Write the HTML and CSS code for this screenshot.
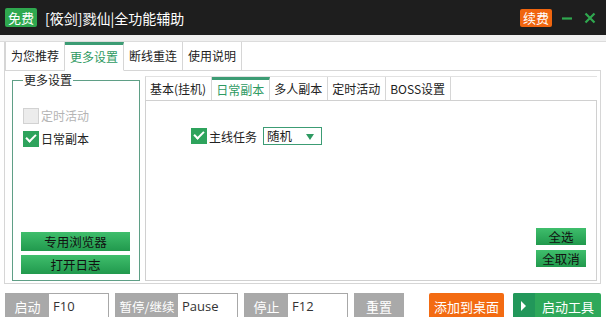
FILE: index.html
```html
<!DOCTYPE html>
<html lang="zh-CN">
<head>
    <meta charset="UTF-8">
    <title>[筱剑]戮仙|全功能辅助</title>
    <link rel="stylesheet" href="styles.css">
</head>
<body>
    <header class="titlebar">
        <span class="badge free">免费</span>
        <span class="title">[筱剑]戮仙|全功能辅助</span>
        <span class="spacer"></span>
        <span class="badge renew">续费</span>
        <svg class="win-btn" width="12" height="12" viewBox="0 0 12 12"><path d="M1 6.5h10" stroke="#2fa84f" stroke-width="2.2"/></svg>
        <svg class="win-btn" width="12" height="12" viewBox="0 0 12 12"><path d="M1.5 1.5l9 9M10.5 1.5l-9 9" stroke="#2fa84f" stroke-width="2.2"/></svg>
    </header>
    <div class="strip"></div>
    <nav class="tabs main-tabs">
        <span class="tab">为您推荐</span>
        <span class="tab active">更多设置</span>
        <span class="tab">断线重连</span>
        <span class="tab">使用说明</span>
    </nav>
    <section class="panel">
        <fieldset class="group">
            <legend>更多设置</legend>
            <label class="check disabled"><span class="box"></span>定时活动</label>
            <label class="check"><span class="box on"></span>日常副本</label>
            <div class="group-buttons">
                <button class="green-btn">专用浏览器</button>
                <button class="green-btn">打开日志</button>
            </div>
        </fieldset>
        <div class="sub">
            <nav class="tabs sub-tabs">
                <span class="tab">基本(挂机)</span>
                <span class="tab active">日常副本</span>
                <span class="tab">多人副本</span>
                <span class="tab">定时活动</span>
                <span class="tab">BOSS设置</span>
            </nav>
            <div class="sub-body">
                <div class="task-row">
                    <label class="check"><span class="box on"></span>主线任务</label>
                    <div class="select">随机<span class="arrow"></span></div>
                </div>
                <div class="side-buttons">
                    <button class="green-btn small">全选</button>
                    <button class="green-btn small">全取消</button>
                </div>
            </div>
        </div>
    </section>
    <footer class="bottombar">
        <div class="hotkey"><span class="hk-label">启动</span><span class="hk-input">F10</span></div>
        <div class="hotkey"><span class="hk-label wide">暂停/继续</span><span class="hk-input">Pause</span></div>
        <div class="hotkey"><span class="hk-label">停止</span><span class="hk-input">F12</span></div>
        <button class="gray-btn">重置</button>
        <button class="orange-btn">添加到桌面</button>
        <button class="start-btn"><span class="play"></span><span class="start-text">启动工具</span></button>
    </footer>
</body>
</html>
```

FILE: styles.css
```css
* {
    margin: 0;
    padding: 0;
    box-sizing: border-box;
}
body {
    width: 606px;
    height: 317px;
    overflow: hidden;
    background-color: #fff;
    color: #222;
    font-family: "Noto Sans CJK SC", "Liberation Sans", sans-serif;
    font-size: 12px;
}
.titlebar {
    height: 35px;
    background-color: #1e1e1e;
    display: flex;
    align-items: center;
    padding: 0 10px 0 5px;
}
.badge {
    height: 19px;
    line-height: 19px;
    padding: 0 3px;
    border-radius: 2px;
    color: #fff;
    font-size: 13px;
}
.free {
    background-color: #2fa84f;
}
.renew {
    background-color: #f0650f;
    height: 18px;
    line-height: 18px;
}
.title {
    color: #fff;
    font-size: 14px;
    margin-left: 8px;
}
.spacer {
    flex: 1;
}
.win-btn {
    margin-left: 9px;
}
.win-btn:last-child {
    margin-left: 11px;
}
.strip {
    height: 7px;
    background-color: #f0f0f0;
    border-bottom: 1px solid #dcdcdc;
}
.tabs {
    display: flex;
}
.tab {
    display: block;
    padding: 0 5px;
    border-right: 1px solid #d6d6d6;
    color: #222;
    white-space: nowrap;
}
.tab.active {
    color: #2e9a62;
    border-top: 3px solid #3c9c74;
}
.main-tabs {
    height: 28px;
    padding-left: 4px;
    border-left: 1px solid #d6d6d6;
    margin-left: 4px;
}
.main-tabs .tab {
    line-height: 27px;
}
.main-tabs .tab:first-child {
    border-left: 1px solid #d6d6d6;
    margin-left: -4px;
}
.main-tabs .tab.active {
    line-height: 23px;
    background-color: #fff;
    border-bottom: 1px solid #fff;
    height: 29px;
}
.panel {
    height: 214px;
    margin: 0 5px 0 4px;
    border: 1px solid #d6d6d6;
    display: flex;
    gap: 5px;
    padding: 5px 3px 2px 7px;
}
.group {
    width: 128px;
    border: 1px solid #5f9f86;
    padding: 6px 10px 6px 10px;
    display: flex;
    flex-direction: column;
    margin-top: -3px;
}
.group legend {
    padding: 0 1px;
    line-height: 14px;
}
.check {
    display: flex;
    align-items: center;
    height: 17px;
    gap: 2px;
    margin-bottom: 6px;
    white-space: nowrap;
}
.check.disabled {
    color: #b4b4b4;
}
.box {
    width: 16px;
    height: 16px;
    border: 1px solid #d2d2d2;
    background-color: #ececec;
    position: relative;
    flex-shrink: 0;
}
.box.on {
    border: none;
    background-color: #2ea35c;
}
.box.on::after {
    content: "";
    position: absolute;
    left: 3px;
    top: 3px;
    width: 8px;
    height: 4px;
    border-left: 2px solid #fff;
    border-bottom: 2px solid #fff;
    transform: rotate(-45deg);
}
.group .check:first-of-type {
    margin-top: 14px;
}
.group-buttons {
    margin-top: auto;
    display: flex;
    flex-direction: column;
    gap: 4px;
    margin-left: -2px;
    margin-right: -1px;
}
.green-btn {
    height: 19px;
    border: none;
    background: linear-gradient(#3fbe6c, #21994d);
    color: #111;
    font-family: inherit;
    font-size: 12.5px;
}
.sub {
    flex: 1;
    display: flex;
    flex-direction: column;
}
.sub-tabs {
    height: 24px;
    border-left: 1px solid #d6d6d6;
    border-top: 1px solid #e2e2e2;
}
.sub-tabs .tab {
    line-height: 23px;
    padding: 0 5px 0 4px;
}
.sub-tabs .tab.active {
    line-height: 20px;
}
.sub-body {
    flex: 1;
    border: 1px solid #d0d0d0;
    display: flex;
    justify-content: space-between;
    padding: 26px 10px 13px 45px;
}
.task-row {
    display: flex;
    align-items: flex-start;
    gap: 6px;
}
.task-row .check {
    height: 18px;
}
.select {
    width: 59px;
    height: 18px;
    border: 1px solid #3c9c74;
    padding-left: 3px;
    line-height: 16px;
    font-size: 12.5px;
    position: relative;
}
.arrow {
    position: absolute;
    right: 7px;
    top: 6px;
    border-left: 4px solid transparent;
    border-right: 4px solid transparent;
    border-top: 6px solid #2e9a62;
}
.side-buttons {
    align-self: flex-end;
    display: flex;
    flex-direction: column;
    gap: 5px;
}
.green-btn.small {
    width: 50px;
    height: 17px;
    line-height: 17px;
}
.bottombar {
    margin-top: 9px;
    padding-left: 5px;
    display: flex;
    align-items: flex-start;
    height: 30px;
}
.bottombar > * {
    flex-shrink: 0;
}
.hotkey {
    display: flex;
    height: 26px;
    border: 1px solid #a8a8a8;
    margin-right: 6px;
}
.hk-label {
    width: 43px;
    background-color: #a9a9a9;
    color: #fff;
    text-align: center;
    line-height: 25px;
    font-size: 13px;
    white-space: nowrap;
}
.hk-label.wide {
    width: 62px;
    font-size: 12.5px;
}
.hk-input {
    width: 59px;
    background-color: #fff;
    padding-left: 4px;
    line-height: 25px;
    font-size: 13px;
    color: #333;
    font-family: "Open Sans", "Noto Sans", sans-serif;
    white-space: nowrap;
}
.gray-btn {
    width: 50px;
    height: 26px;
    border: none;
    background-color: #a9a9a9;
    color: #fff;
    font-family: inherit;
    font-size: 13px;
}
.orange-btn {
    margin-left: 25px;
    width: 75px;
    height: 26px;
    border: none;
    border-radius: 2px;
    background-color: #f36b12;
    color: #fff;
    font-family: inherit;
    font-size: 13px;
    white-space: nowrap;
}
.start-btn {
    margin-left: 9px;
    width: 88px;
    height: 26px;
    border: none;
    border-radius: 2px;
    background-color: #2ea85a;
    display: flex;
    align-items: center;
    overflow: hidden;
}
.play {
    width: 22px;
    height: 26px;
    background-color: #22975a;
    position: relative;
}
.play::after {
    content: "";
    position: absolute;
    left: 8px;
    top: 8px;
    border-top: 5px solid transparent;
    border-bottom: 5px solid transparent;
    border-left: 5px solid #fff;
}
.start-text {
    flex: 1;
    color: #fff;
    font-family: "Noto Sans CJK SC", sans-serif;
    font-size: 13px;
    white-space: nowrap;
}
```
